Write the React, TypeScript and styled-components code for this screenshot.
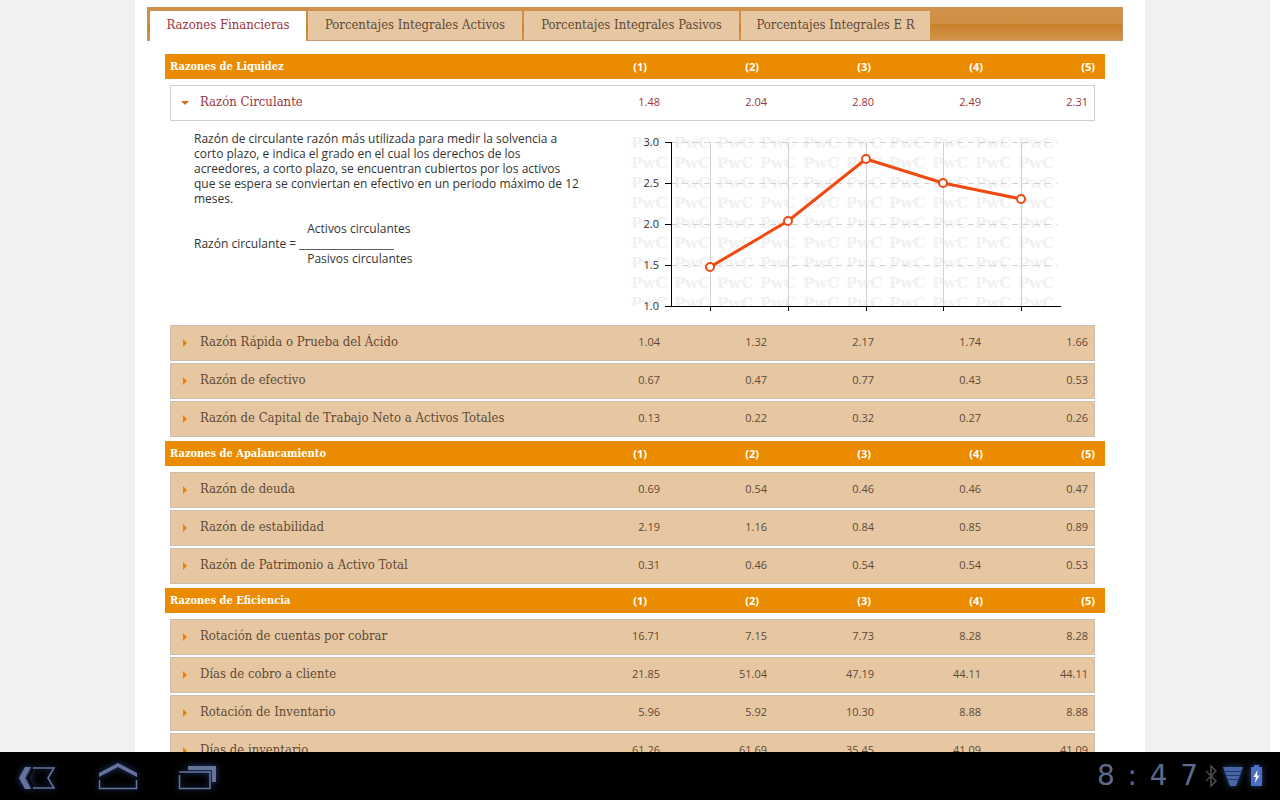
import React, { useState } from "react";
import styled, { createGlobalStyle } from "styled-components";

const serif = '"DejaVu Serif Condensed", "DejaVu Serif", serif';
const sans = '"Open Sans", "Noto Sans", sans-serif';

const GlobalStyle = createGlobalStyle`
  * { box-sizing: border-box; }
  body { margin: 0; background: #f0f0f0; font-family: ${sans}; }
  button { font: inherit; margin: 0; cursor: pointer; }
`;

const Screen = styled.div`
  display: flex;
  flex-direction: column;
  height: 100vh;
`;

const Viewport = styled.main`
  flex: 1;
  min-height: 0;
  overflow: hidden;
  padding-left: 10px;
  border-right: 10px solid #fff;
  background: #f1f1f1;
`;

const Sheet = styled.div`
  max-width: 1010px;
  min-height: 100%;
  margin: 0 auto;
  padding: 7px 22px 0 12px;
  background: #fff;
`;

const TabBar = styled.div`
  display: flex;
  gap: 2px;
  height: 34px;
  padding: 3px 2px 0;
  border: 1px solid #c4935c;
  border-bottom-color: #c49a72;
  background: linear-gradient(#d19148 0%, #d08f45 50%, #c8812a 51%, #d2934b 100%);
`;

const Tab = styled.button<{ $active: boolean; $width: number }>`
  min-width: ${(p) => p.$width}px;
  height: ${(p) => (p.$active ? 30 : 29)}px;
  padding: 0 14px 2px;
  border: 0;
  background: ${(p) => (p.$active ? "#fff" : "#e7c7a2")};
  color: ${(p) => (p.$active ? "#9c343c" : "#604a36")};
  font-family: ${serif};
  font-size: 13px;
  line-height: 18px;
  text-align: center;
  white-space: nowrap;
`;

const Ratios = styled.div`
  padding: 13px 18px 0;
`;

const SectionHeader = styled.div`
  display: grid;
  grid-template-columns: 1fr repeat(5, 112px);
  align-items: center;
  height: 25px;
  padding: 0 10px 0 5px;
  background: #eb8c00;
  color: #fff;
  font-size: 11px;
  font-weight: 700;
  line-height: 15px;
`;

const SectionTitle = styled.h2`
  margin: 0;
  font-family: ${serif};
  font-size: 11px;
  line-height: 15px;
`;

const Figure = styled.span`
  text-align: right;
`;

const Rows = styled.div`
  display: flex;
  flex-direction: column;
  gap: 2px;
  padding: 6px 10px 4px 5px;
`;

const Row = styled.button<{ $open: boolean }>`
  display: grid;
  grid-template-columns: 29px 1fr repeat(5, 107px);
  align-items: center;
  width: 100%;
  height: 36px;
  padding: 0 6px 2px 0;
  border: 1px solid ${(p) => (p.$open ? "#d6cdc4" : "#cdbfae")};
  background: ${(p) => (p.$open ? "#fff" : "#e7c7a2")};
  color: ${(p) => (p.$open ? "#9c343c" : "#604a36")};
  font-size: 11px;
  line-height: 18px;
`;

const RowName = styled.span`
  font-family: ${serif};
  font-size: 13px;
  text-align: left;
`;

const Arrow = styled.svg`
  display: block;
  margin: 1px 0 0 9px;
`;

const Detail = styled.div`
  display: grid;
  grid-template-columns: minmax(0, 1fr) 440px;
  gap: 12px;
  height: 200px;
  padding: 2px 25px 0 24px;
`;

const Explanation = styled.div`
  padding-top: 6px;
  color: #333;
  font-size: 12px;
  line-height: 15px;
  white-space: nowrap;
`;

const Paragraph = styled.p`
  margin: 0 0 15px;
`;

const Formula = styled.div`
  display: grid;
  grid-template-columns: auto 1fr;
  column-gap: 3px;
`;

const FormulaTerm = styled.span`
  grid-column: 2;
  padding-left: 8px;
`;

const SystemBar = styled.footer`
  display: flex;
  justify-content: space-between;
  height: 48px;
  background: #000;
`;

const NavButtons = styled.nav`
  display: flex;
  padding-left: 8px;
`;

const NavButton = styled.button`
  width: 80px;
  height: 48px;
  padding: 0;
  border: 0;
  background: none;
`;

const Glyph = styled.svg`
  display: block;
  filter: drop-shadow(0 0 3px #2c4684);
`;

const Status = styled.div`
  display: flex;
  align-items: center;
  padding-right: 12px;
`;

const Clock = styled.time`
  display: flex;
  justify-content: space-between;
  width: 101px;
  margin-right: 6px;
  color: #5d6a8c;
  font-family: "DejaVu Sans", sans-serif;
  font-size: 28px;
  line-height: 48px;
`;

type Ratio = { name: string; values: string[] };
const sections: { title: string; ratios: Ratio[] }[] = [
  {
    title: "Razones de Liquidez",
    ratios: [
      { name: "Razón Circulante", values: ["1.48", "2.04", "2.80", "2.49", "2.31"] },
      { name: "Razón Rápida o Prueba del Ácido", values: ["1.04", "1.32", "2.17", "1.74", "1.66"] },
      { name: "Razón de efectivo", values: ["0.67", "0.47", "0.77", "0.43", "0.53"] },
      { name: "Razón de Capital de Trabajo Neto a Activos Totales", values: ["0.13", "0.22", "0.32", "0.27", "0.26"] },
    ],
  },
  {
    title: "Razones de Apalancamiento",
    ratios: [
      { name: "Razón de deuda", values: ["0.69", "0.54", "0.46", "0.46", "0.47"] },
      { name: "Razón de estabilidad", values: ["2.19", "1.16", "0.84", "0.85", "0.89"] },
      { name: "Razón de Patrimonio a Activo Total", values: ["0.31", "0.46", "0.54", "0.54", "0.53"] },
    ],
  },
  {
    title: "Razones de Eficiencia",
    ratios: [
      { name: "Rotación de cuentas por cobrar", values: ["16.71", "7.15", "7.73", "8.28", "8.28"] },
      { name: "Días de cobro a cliente", values: ["21.85", "51.04", "47.19", "44.11", "44.11"] },
      { name: "Rotación de Inventario", values: ["5.96", "5.92", "10.30", "8.88", "8.88"] },
      { name: "Días de inventario", values: ["61.26", "61.69", "35.45", "41.09", "41.09"] },
    ],
  },
];

const tabs = [
  { label: "Razones Financieras", width: 156 },
  { label: "Porcentajes Integrales Activos", width: 214 },
  { label: "Porcentajes Integrales Pasivos", width: 215 },
  { label: "Porcentajes Integrales E R", width: 189 },
];

const yTicks = ["3.0", "2.5", "2.0", "1.5", "1.0"];
const points = [[80, 142], [158, 96], [236, 34], [313, 58], [391, 74]];

function Chart() {
  return (
    <svg width="440" height="190" viewBox="0 0 440 190" role="img" aria-label="Razón Circulante">
      <defs>
        <clipPath id="plot"><rect x="0" y="0" width="440" height="181" /></clipPath>
      </defs>
      <g clipPath="url(#plot)" fill="#f1f1f1" fontFamily='"DejaVu Serif", serif' fontSize="15" fontWeight="700">
        {Array.from({ length: 9 }, (_, r) =>
          Array.from({ length: 10 }, (_, c) => (
            <text key={`${r}-${c}`} x={1 + c * 43} y={23 + r * 20}>PwC</text>
          ))
        )}
      </g>
      <g stroke="#d2d2d2" strokeWidth="1" fill="none">
        {[17, 58, 99, 140].map((y) => (
          <path key={y} d={`M41 ${y + 0.5}H427`} strokeDasharray="6 5" />
        ))}
        {points.map(([x]) => <path key={x} d={`M${x + 0.5} 17V181`} />)}
      </g>
      <g stroke="#000" strokeWidth="1" fill="none">
        <path d="M41.5 17V182M35 181.5H431" />
        {[17, 58, 99, 140].map((y) => <path key={y} d={`M35 ${y + 0.5}H41`} />)}
        {points.map(([x]) => <path key={x} d={`M${x + 0.5} 181V186`} />)}
      </g>
      <g fill="#333" fontFamily={sans} fontSize="11" textAnchor="end">
        {yTicks.map((t, i) => <text key={t} x="29" y={21 + i * 41}>{t}</text>)}
      </g>
      <polyline points={points.map((p) => p.join(",")).join(" ")} fill="none" stroke="#ee4a12" strokeWidth="3" />
      {points.map(([x, y]) => (
        <circle key={x} cx={x} cy={y} r="4" fill="#fff" stroke="#ee4a12" strokeWidth="2" />
      ))}
    </svg>
  );
}

function RatioDetail() {
  return (
    <Detail>
      <Explanation>
        <Paragraph>
          Razón de circulante razón más utilizada para medir la solvencia a<br />
          corto plazo, e indica el grado en el cual los derechos de los<br />
          acreedores, a corto plazo, se encuentran cubiertos por los activos<br />
          que se espera se conviertan en efectivo en un periodo máximo de 12<br />
          meses.
        </Paragraph>
        <Formula>
          <FormulaTerm>Activos circulantes</FormulaTerm>
          <span>Razón circulante =</span>
          <span>__________________</span>
          <FormulaTerm>Pasivos circulantes</FormulaTerm>
        </Formula>
      </Explanation>
      <Chart />
    </Detail>
  );
}

export default function App() {
  const [tab, setTab] = useState(0);
  const [open, setOpen] = useState("Razón Circulante");
  return (
    <Screen>
      <GlobalStyle />
      <Viewport>
        <Sheet>
          <TabBar role="tablist">
            {tabs.map((t, i) => (
              <Tab key={t.label} role="tab" aria-selected={tab === i} $active={tab === i} $width={t.width} onClick={() => setTab(i)}>
                {t.label}
              </Tab>
            ))}
          </TabBar>
          <Ratios>
            {sections.map((s) => (
              <section key={s.title}>
                <SectionHeader>
                  <SectionTitle>{s.title}</SectionTitle>
                  {[1, 2, 3, 4, 5].map((n) => <Figure key={n}>({n})</Figure>)}
                </SectionHeader>
                <Rows>
                  {s.ratios.map((r) => {
                    const isOpen = open === r.name;
                    return (
                      <React.Fragment key={r.name}>
                        <Row $open={isOpen} aria-expanded={isOpen} onClick={() => setOpen(isOpen ? "" : r.name)}>
                          <Arrow width="10" height="10" viewBox="0 0 10 10" aria-hidden="true">
                            <path d={isOpen ? "M1 3H9L5 7Z" : "M3 1V9L7 5Z"} fill={isOpen ? "#dd6a1a" : "#e8820c"} />
                          </Arrow>
                          <RowName>{r.name}</RowName>
                          {r.values.map((v, i) => <Figure key={i}>{v}</Figure>)}
                        </Row>
                        {isOpen && <RatioDetail />}
                      </React.Fragment>
                    );
                  })}
                </Rows>
              </section>
            ))}
          </Ratios>
        </Sheet>
      </Viewport>
      <SystemBar>
        <NavButtons>
          <NavButton aria-label="Atrás">
            <Glyph width="80" height="48" viewBox="8 0 80 48">
              <path d="M25 15H31L25 26L31 37H25L19 26Z" fill="#66749b" />
              <path d="M33 16H54L48 26L54 36H33M33 17L28 26L33 35" fill="none" stroke="#66749b" strokeWidth="1.500" />
              <path d="M33 17L28 26L33 35" fill="none" stroke="#000" strokeWidth="2" />
            </Glyph>
          </NavButton>
          <NavButton aria-label="Inicio">
            <Glyph width="80" height="48" viewBox="88 0 80 48">
              <path d="M99 21L118 11L137 21V25L118 15L99 25Z" fill="#66749b" />
              <path d="M99.500 28V36.500H136.500V28" fill="none" stroke="#66749b" strokeWidth="1.500" />
            </Glyph>
          </NavButton>
          <NavButton aria-label="Aplicaciones recientes">
            <Glyph width="80" height="48" viewBox="168 0 80 48">
              <path d="M188 14H216V30H212V18H188Z" fill="#66749b" />
              <path d="M179 20H210V36.500H179.500V23" fill="none" stroke="#66749b" strokeWidth="1.500" />
            </Glyph>
          </NavButton>
        </NavButtons>
        <Status>
          <Clock>
            {["8", ":", "4", "7"].map((c) => <span key={c}>{c}</span>)}
          </Clock>
          <svg width="18" height="48" viewBox="1204 0 18 48" aria-hidden="true">
            <path d="M1206 19L1216 29L1211 34V14L1216 19L1206 29" fill="none" stroke="#4a4c52" strokeWidth="1.500" />
          </svg>
          <Glyph width="46" height="48" viewBox="1222 0 46 48" aria-hidden="true">
            <path d="M1223 15H1243L1236 34H1230Z" fill="#4865a6" />
            <path d="M1225 19.500H1241M1226 23.500H1240M1228 27.500H1238" stroke="#22386e" />
            <path d="M1251 15H1254V13H1259V15H1262V34H1251Z" fill="#4a6fc0" />
            <path d="M1257.500 18L1253.500 25H1256L1255 31L1259.500 23.500H1257Z" fill="#fff" />
          </Glyph>
        </Status>
      </SystemBar>
    </Screen>
  );
}
